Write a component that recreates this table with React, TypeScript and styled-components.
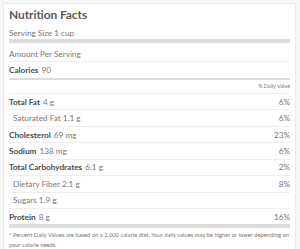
import styled, { createGlobalStyle } from 'styled-components'

const GlobalStyle = createGlobalStyle`
  html, body {
    margin: 0;
    padding: 0;
    background: #f7f7f7;
  }
  body {
    font-family: Lato, 'Open Sans', sans-serif;
    color: #777;
  }
`

const Page = styled.div`
  padding: 3px 4px 0 3px;
`

const Card = styled.section`
  background: #fff;
  border: 1px solid #ebebeb;
  border-bottom: none;
  padding: 0 5px 0 5px;
`

const Title = styled.h2`
  margin: 0;
  font-size: 12px;
  font-weight: 700;
  letter-spacing: -0.1px;
  color: #5a5a5a;
  line-height: 22px;
`

type Weight = 'thin' | 'mid' | 'thick'

const borderFor = (w?: Weight) =>
  w === 'thick' ? '4px solid #dcdcdc' : w === 'mid' ? '2px solid #dcdcdc' : '1px solid #eee'

const Line = styled.div<{ $weight?: Weight; $h: number; $pt?: number }>`
  display: flex;
  justify-content: space-between;
  align-items: center;
  font-size: 8.2px;
  height: ${(p) => p.$h}px;
  padding-top: ${(p) => p.$pt ?? 0}px;
  border-bottom: ${(p) => borderFor(p.$weight)};
`

const Row = styled(Line)<{ $indent?: boolean }>`
  padding-left: ${(p) => (p.$indent ? '4px' : '0')};
`

const Label = styled.b`
  font-weight: 700;
  color: #4a4a4a;
  margin-right: 3px;
`

const DailyHead = styled.div`
  font-size: 5.4px;
  height: 13px;
  line-height: 13px;
  text-align: right;
  border-bottom: 1px solid #eee;
`

const Foot = styled.p`
  margin: 0;
  padding-top: 2px;
  font-size: 5.8px;
  line-height: 10px;
`

type Nutrient = {
  name: string
  amount: string
  daily?: string
  sub?: boolean
  last?: boolean
}

const nutrients: Nutrient[] = [
  { name: 'Total Fat', amount: '4 g', daily: '6%' },
  { name: 'Saturated Fat', amount: '1.1 g', daily: '6%', sub: true },
  { name: 'Cholesterol', amount: '69 mg', daily: '23%' },
  { name: 'Sodium', amount: '138 mg', daily: '6%' },
  { name: 'Total Carbohydrates', amount: '6.1 g', daily: '2%' },
  { name: 'Dietary Fiber', amount: '2.1 g', daily: '8%', sub: true },
  { name: 'Sugars', amount: '1.9 g', sub: true },
  { name: 'Protein', amount: '8 g', daily: '16%', last: true },
]

export default function App() {
  return (
    <Page>
      <GlobalStyle />
      <Card>
        <Title>Nutrition Facts</Title>
        <Line $weight="thick" $h={13}>
          <span>Serving Size 1 cup</span>
        </Line>
        <Line $h={15} $pt={3}>
          <span>Amount Per Serving</span>
        </Line>
        <Line $weight="mid" $h={16}>
          <span>
            <Label>Calories</Label>90
          </span>
        </Line>
        <DailyHead>% Daily Value</DailyHead>
        {nutrients.map((n) => (
          <Row key={n.name} $h={15.43} $indent={n.sub} $weight={n.last ? 'thick' : 'thin'}>
            <span>
              {n.sub ? n.name + ' ' : <Label>{n.name}</Label>}
              {n.amount}
            </span>
            <span>{n.daily}</span>
          </Row>
        ))}
        <Foot>
          * Percent Daily Values are based on a 2,000 calorie diet. Your daily values may be higher or lower depending on
          <br />
          your calorie needs.
        </Foot>
      </Card>
    </Page>
  )
}
